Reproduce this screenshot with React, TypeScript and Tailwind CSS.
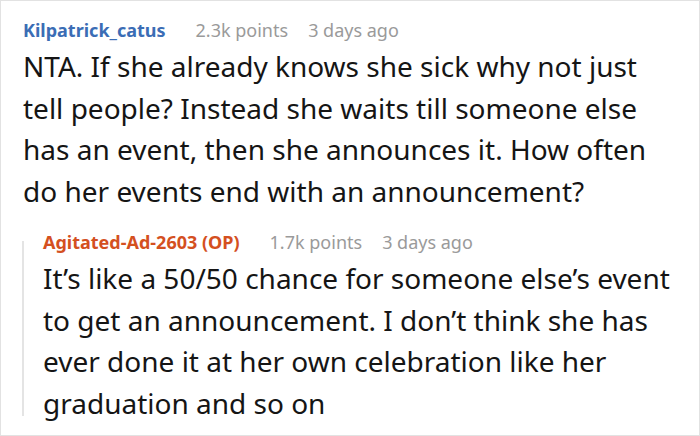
const font = { fontFamily: '"Noto Sans", "Open Sans", sans-serif' }

type CommentProps = {
  author: string
  authorClass: string
  points: string
  age: string
  lines: string
}

const Comment = ({ author, authorClass, points, age, lines }: CommentProps) => (
  <div>
    <div className="flex items-baseline text-[18px] leading-[24px]">
      <span className={`font-bold ${authorClass}`}>{author}</span>
      <span className="ml-[30px] text-[#9a9a9a]">{points}</span>
      <span className="ml-[20px] text-[#9a9a9a]">{age}</span>
    </div>
    <p className="mt-[4px] text-[28px] leading-[41.7px] text-[#151515]">{lines}</p>
  </div>
)

export default function App() {
  return (
    <div
      className="h-[436px] w-[700px] overflow-hidden border border-[#e2e2e2] bg-white pl-[22px] pr-[24px] pt-[17px]"
      style={font}
    >
      <Comment
        author="Kilpatrick_catus"
        authorClass="text-[#3b6db5]"
        points="2.3k points"
        age="3 days ago"
        lines="NTA. If she already knows she sick why not just tell people? Instead she waits till someone else has an event, then she announces it. How often do her events end with an announcement?"
      />
      <div className="mt-[17px] -ml-[1px] flex">
        <div className="mb-[9px] mt-[11px] w-[2px] shrink-0 bg-[#e4e4e4]" />
        <div className="pl-[19px]">
          <Comment
            author="Agitated-Ad-2603 (OP)"
            authorClass="text-[#d4501f]"
            points="1.7k points"
            age="3 days ago"
            lines="It’s like a 50/50 chance for someone else’s event to get an announcement. I don’t think she has ever done it at her own celebration like her graduation and so on"
          />
        </div>
      </div>
    </div>
  )
}
